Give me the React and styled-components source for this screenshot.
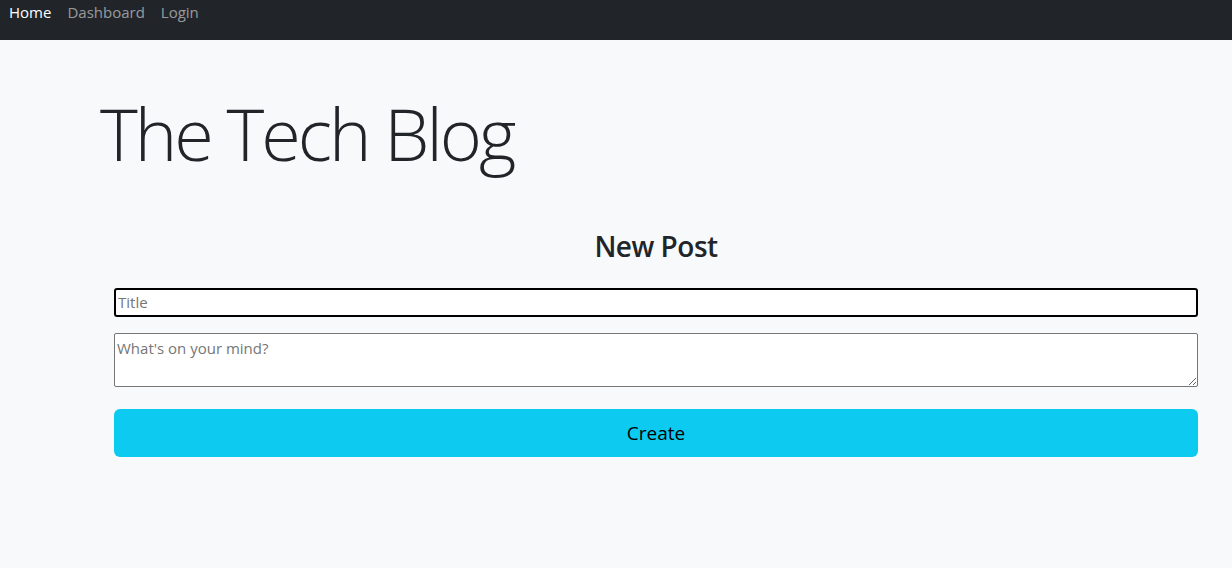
import React, { useState } from 'react';
import styled, { createGlobalStyle } from 'styled-components';

const GlobalStyle = createGlobalStyle`
  html, body {
    margin: 0;
    padding: 0;
    background-color: #f8f9fa;
  }
  body {
    font-family: "Open Sans", "Noto Sans", "Liberation Sans", sans-serif;
    color: #212529;
  }
  * {
    box-sizing: border-box;
  }
`;

const Page = styled.div`
  min-height: 568px;
  background-color: #f8f9fa;
`;

const Navbar = styled.nav`
  background-color: #212529;
  height: 40px;
  display: flex;
  align-items: flex-start;
  padding: 0 1px;
`;

const NavLink = styled.a`
  font-size: 15px;
  line-height: 24px;
  padding: 0 8px;
  text-decoration: none;
  color: ${(p) => (p.$active ? '#ffffff' : 'rgba(255, 255, 255, 0.55)')};
  cursor: pointer;

  &:hover {
    color: rgba(255, 255, 255, 0.75);
  }
`;

const Main = styled.main`
  padding: 50px 34px 0 100px;
`;

const Title = styled.h1`
  font-size: 72px;
  font-weight: 300;
  line-height: 1.2;
  margin: 0;
  letter-spacing: -3px;
`;

const PostSection = styled.section`
  padding-left: 14px;
  margin-top: 54px;
  display: flex;
  flex-direction: column;
`;

const SectionTitle = styled.h3`
  font-size: 28px;
  font-weight: 600;
  line-height: 1.2;
  text-align: center;
  letter-spacing: -0.5px;
  margin: 0 0 24px 0;
`;

const Form = styled.form`
  display: flex;
  flex-direction: column;
`;

const TitleInput = styled.input`
  width: 100%;
  height: 29px;
  font-family: inherit;
  font-size: 15px;
  padding: 0 2px;
  border: 2px solid #000;
  border-radius: 3px;
  background: #fff;
  outline: none;
  margin-bottom: 16px;

  &::placeholder {
    color: #767676;
  }
`;

const BodyInput = styled.textarea`
  width: 100%;
  height: 54px;
  font-family: inherit;
  font-size: 15px;
  line-height: 20px;
  padding: 4px 2px 2px;
  border: 1px solid #767676;
  border-radius: 2px;
  background: #fff;
  resize: vertical;
  margin-bottom: 22px;

  &::placeholder {
    color: #767676;
  }
`;

const CreateButton = styled.button`
  width: 100%;
  height: 48px;
  background-color: #0dcaf0;
  color: #000;
  border: none;
  border-radius: 6px;
  font-family: inherit;
  font-size: 19px;
  cursor: pointer;

  &:hover {
    background-color: #31d2f2;
  }
`;

function App() {
  const [title, setTitle] = useState('');
  const [body, setBody] = useState('');

  const handleSubmit = (e) => {
    e.preventDefault();
  };

  return (
    <Page>
      <GlobalStyle />
      <Navbar>
        <NavLink $active>Home</NavLink>
        <NavLink>Dashboard</NavLink>
        <NavLink>Login</NavLink>
      </Navbar>
      <Main>
        <Title>The Tech Blog</Title>
        <PostSection>
          <SectionTitle>New Post</SectionTitle>
          <Form onSubmit={handleSubmit}>
            <TitleInput
              type="text"
              placeholder="Title"
              value={title}
              onChange={(e) => setTitle(e.target.value)}
            />
            <BodyInput
              placeholder="What's on your mind?"
              value={body}
              onChange={(e) => setBody(e.target.value)}
            />
            <CreateButton type="submit">Create</CreateButton>
          </Form>
        </PostSection>
      </Main>
    </Page>
  );
}

export default App;
